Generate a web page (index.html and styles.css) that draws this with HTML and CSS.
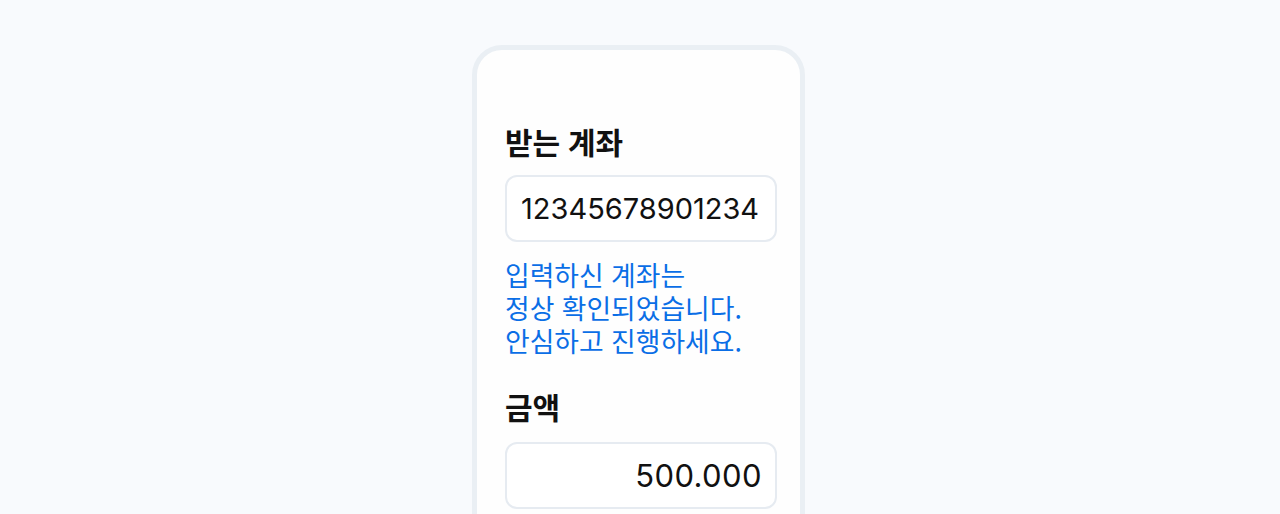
FILE: index.html
```html
<!DOCTYPE html>
<html lang="ko">
<head>
<meta charset="utf-8">
<title>송금</title>
<link rel="stylesheet" href="styles.css">
</head>
<body>
<main class="page">
  <section class="card">
    <label class="field-label" for="acc">받는 계좌</label>
    <div class="input" id="acc">12345678901234</div>
    <p class="helper">입력하신 계좌는<br>정상 확인되었습니다.<br>안심하고 진행하세요.</p>
    <label class="field-label amount-label" for="amt">금액</label>
    <div class="input input-right" id="amt">500.000</div>
  </section>
</main>
</body>
</html>
```
FILE: styles.css
```css
html, body {
  margin: 0;
  padding: 0;
  background: #f8fafd;
  height: 100%;
  overflow: hidden;
}
body {
  font-family: "Noto Sans CJK KR", "Noto Sans", sans-serif;
  color: #111;
}
.page {
  display: flex;
  justify-content: flex-start;
  padding-top: 45px;
  padding-left: 472px;
}
.card {
  box-sizing: border-box;
  width: 333px;
  height: 520px;
  border: 5px solid #eaeff4;
  border-radius: 30px;
  background: #fefefe;
  padding: 73px 23px 0 28px;
  display: flex;
  flex-direction: column;
}
.field-label {
  display: block;
  font-size: 30px;
  font-weight: 700;
  line-height: 36px;
  margin: 0 0 16px;
  letter-spacing: -0.2px;
}
.input {
  box-sizing: border-box;
  height: 67px;
  border: 2px solid #e6ebf1;
  border-radius: 12px;
  background: #fff;
  padding: 0 14px;
  display: flex;
  align-items: center;
  font-family: Inter, "Noto Sans", sans-serif;
  font-size: 29px;
  color: #111;
}
.input-right {
  justify-content: flex-end;
  font-size: 31px;
  letter-spacing: 0.4px;
  padding-right: 13px;
}
.helper {
  margin: 16px 0 0;
  font-size: 26.8px;
  line-height: 33px;
  color: #0a6ee6;
}
.amount-label {
  margin-top: 31px;
  margin-bottom: 18px;
}
```
